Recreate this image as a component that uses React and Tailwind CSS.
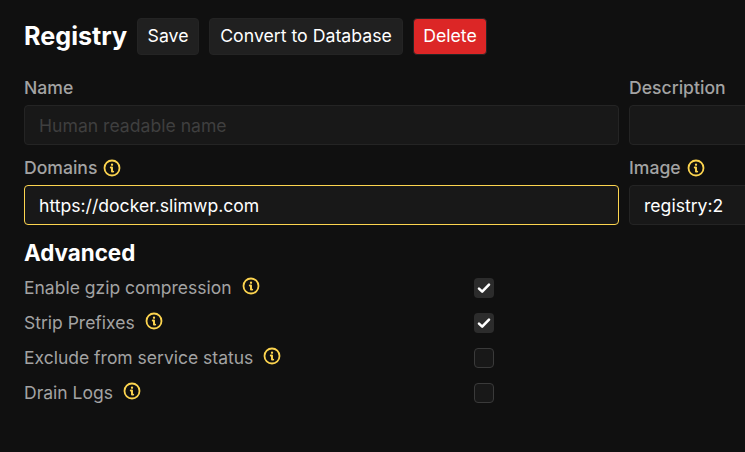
import React from "react";

const Info = ({ className = "" }) => (
  <svg className={`w-[18px] h-[18px] shrink-0 text-[#fcd44f] ${className}`} viewBox="0 0 24 24" fill="none" stroke="currentColor" strokeWidth="2.4" strokeLinecap="round" strokeLinejoin="round">
    <circle cx="12" cy="12" r="10" />
    <path d="M12 7.6v.2" strokeWidth="3" />
    <path d="M10.4 11.4H12v5.4h1.6" strokeWidth="2.6" />
  </svg>
);

const Btn = ({ children, className = "" }) => (
  <button className={`h-[37px] rounded-[4px] border text-[17.7px] text-white flex items-center justify-center ${className}`}>{children}</button>
);

const Field = ({ label, info, value, placeholder, focus }) => (
  <div className="w-[595px] shrink-0 flex flex-col">
    <div className="h-[24px] flex items-center gap-[6px] text-[17.6px] font-medium text-[#a3a3a3] leading-none">
      {label}
      {info && <Info />}
    </div>
    <div className={`mt-[5px] h-[40px] rounded-[4px] bg-[#181818] flex items-center pl-[14px] pt-[2px] text-[17.6px] border ${focus ? "border-[#fcd44f]" : "border-[#242424]"} ${value ? "text-white" : "text-[#3f3f3f]"}`}>
      {value || placeholder}
    </div>
  </div>
);

const Check = ({ label, checked }) => (
  <div className="h-[35px] flex items-center">
    <div className="w-[450px] flex items-center text-[17.5px] text-[#a3a3a3] whitespace-nowrap">
      <span className="mr-[10px]">{label}</span>
      <Info className="-translate-y-[2px]" />
    </div>
    <div className={`w-[20px] h-[20px] rounded-[4px] flex items-center justify-center ${checked ? "bg-[#2c2c2c]" : "bg-[#181818] border border-[#3a3a3a]"}`}>
      {checked && (
        <svg className="w-[14px] h-[14px]" viewBox="0 0 14 14" fill="none" stroke="#fff" strokeWidth="2.6" strokeLinecap="round" strokeLinejoin="round">
          <path d="M2 7.6 5.2 10.6 12 3.6" />
        </svg>
      )}
    </div>
  </div>
);

const rows = [
  ["Enable gzip compression", true],
  ["Strip Prefixes", true],
  ["Exclude from service status", false],
  ["Drain Logs", false],
];

export default function App() {
  return (
    <div className="w-[745px] h-[452px] overflow-hidden bg-[#101010] pl-[24px] pt-[18px] text-white" style={{ fontFamily: "Inter, 'Liberation Sans', sans-serif" }}>
      <div className="flex items-center h-[37px]">
        <h1 className="w-[113px] text-[25.2px] font-bold leading-none whitespace-nowrap">Registry</h1>
        <Btn className="w-[62px] bg-[#202020] border-[#242424] mr-[10px]">Save</Btn>
        <Btn className="w-[194px] bg-[#202020] border-[#242424] mr-[11px]">Convert to Database</Btn>
        <Btn className="w-[74px] -ml-[1px] bg-[#dc2626] border-[#242424]">Delete</Btn>
      </div>
      <div className="flex gap-[10px] mt-[21px]">
        <Field label="Name" placeholder="Human readable name" />
        <Field label="Description" />
      </div>
      <div className="flex gap-[10px] mt-[11px]">
        <Field label="Domains" info value="https://docker.slimwp.com" focus />
        <Field label="Image" info value="registry:2" />
      </div>
      <h3 className="text-[22.4px] font-bold leading-none mt-[17px]">Advanced</h3>
      <div className="mt-[6px] flex flex-col">
        {rows.map(([l, c]) => (
          <Check key={l} label={l} checked={c} />
        ))}
      </div>
    </div>
  );
}
